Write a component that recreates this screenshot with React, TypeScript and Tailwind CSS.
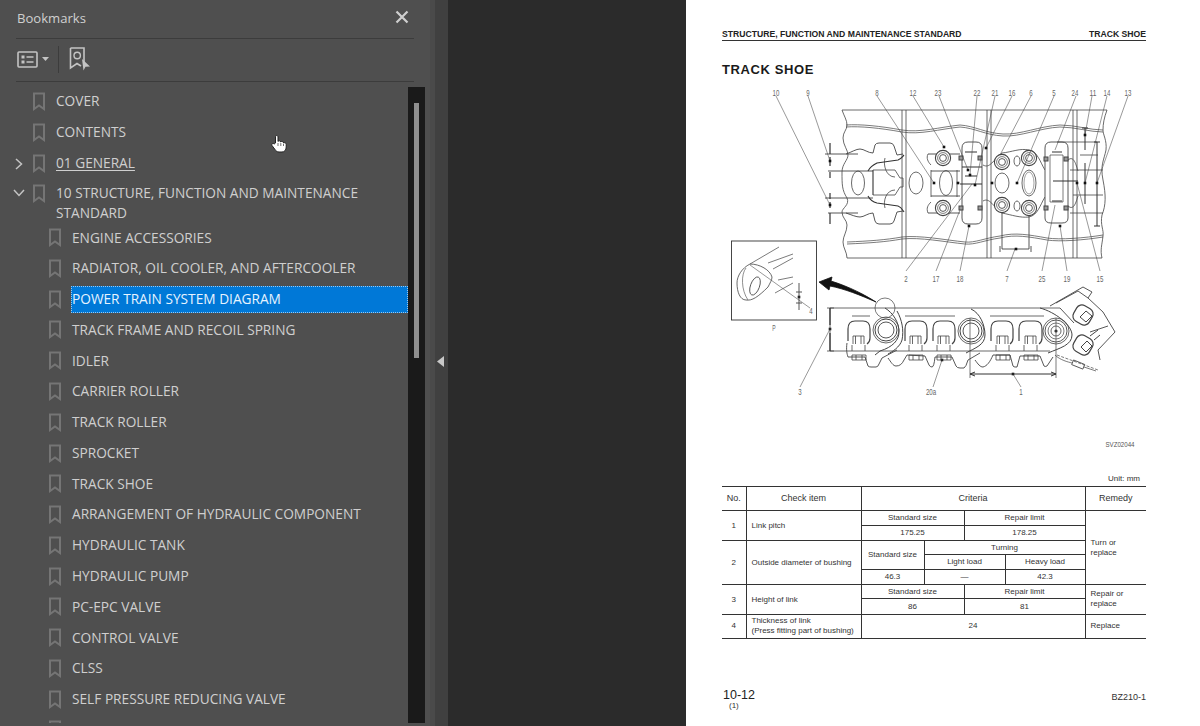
import React from "react";

const Bm = ({ className }: { className: string }) => (
  <svg width="14" height="19" viewBox="0 0 14 19" fill="none" className={className}>
    <path d="M2 1.5H12V17L7 13.5L2 17Z" stroke="#757575" strokeWidth="2" />
  </svg>
);

type Row = { t: string; ch?: "r" | "d"; u?: boolean; sel?: boolean; two?: boolean };
const top: Row[] = [
  { t: "COVER" },
  { t: "CONTENTS" },
  { t: "01 GENERAL", ch: "r", u: true },
  { t: "10 STRUCTURE, FUNCTION AND MAINTENANCE STANDARD", ch: "d", two: true },
];
const kids: Row[] = [
  { t: "ENGINE ACCESSORIES" },
  { t: "RADIATOR, OIL COOLER, AND AFTERCOOLER" },
  { t: "POWER TRAIN SYSTEM DIAGRAM", sel: true },
  { t: "TRACK FRAME AND RECOIL SPRING" },
  { t: "IDLER" },
  { t: "CARRIER ROLLER" },
  { t: "TRACK ROLLER" },
  { t: "SPROCKET" },
  { t: "TRACK SHOE" },
  { t: "ARRANGEMENT OF HYDRAULIC COMPONENT" },
  { t: "HYDRAULIC TANK" },
  { t: "HYDRAULIC PUMP" },
  { t: "PC-EPC VALVE" },
  { t: "CONTROL VALVE" },
  { t: "CLSS" },
  { t: "SELF PRESSURE REDUCING VALVE" },
  { t: " " },
];

const TopRow = ({ r }: { r: Row }) => (
  <div className={`flex items-start pt-[5.4px] ${r.two ? "h-[44.2px]" : "h-[30.8px]"}`}>
    <div className="w-[32px] shrink-0 flex justify-end pr-[8px] pt-[5px]">
      {r.ch === "r" && (
        <svg width="10" height="12" viewBox="0 0 10 12" fill="none">
          <path d="M2 1L7.5 6L2 11" stroke="#c4c4c4" strokeWidth="1.5" />
        </svg>
      )}
      {r.ch === "d" && (
        <svg width="12" height="10" viewBox="0 0 12 10" fill="none" className="-mr-px">
          <path d="M1 2L6 7.5L11 2" stroke="#c4c4c4" strokeWidth="1.5" />
        </svg>
      )}
    </div>
    <Bm className="shrink-0 mt-[1px]" />
    <div className={`ml-[10px] w-[320px] leading-[20px] ${r.u ? "underline underline-offset-2" : ""}`}>{r.t}</div>
  </div>
);

const KidRow = ({ r }: { r: Row }) => (
  <div className="flex items-start h-[30.77px] pl-[48px]">
    <Bm className="shrink-0 mt-[6px]" />
    <div
      className={`ml-[9px] flex-1 pl-px leading-[20px] ${
        r.sel
          ? "h-[27px] mt-[2px] pt-[3.4px] bg-[#0078d7] text-[#e6f3ff] outline-1 outline-dotted outline-[#9cc8ee] -outline-offset-1"
          : "mt-[5.4px]"
      }`}
    >
      {r.t}
    </div>
  </div>
);

const labels: [string, number, number][] = [
  ["10", 776, 92], ["9", 808, 92], ["8", 877, 92], ["12", 913, 92], ["23", 938, 92], ["22", 977, 92], ["21", 995, 92],
  ["16", 1012, 92], ["6", 1031, 92], ["5", 1054, 92], ["24", 1075, 92], ["11", 1093, 92], ["14", 1107, 92], ["13", 1128, 92],
  ["2", 906, 278], ["17", 936, 278], ["18", 960, 278], ["7", 1007, 278], ["25", 1042, 278], ["19", 1067, 278], ["15", 1100, 278],
  ["4", 811, 310], ["P", 774, 327], ["3", 800, 391], ["20a", 931, 391], ["1", 1021, 391],
];
const leaders: number[][] = [
  [776, 96, 830, 205], [808, 96, 830, 161], [877, 96, 934, 183], [913, 96, 944, 147], [939, 96, 968, 170],
  [977, 96, 970, 175], [995, 96, 975, 185], [1012, 96, 986, 148], [1031, 96, 1000, 155], [1054, 96, 1017, 183],
  [1076, 96, 1055, 150], [1092, 96, 1085, 135], [1107, 96, 1085, 183], [1128, 96, 1097, 183],
  [906, 271, 972, 184], [936, 271, 960, 210], [960, 271, 969, 226], [1007, 271, 1015, 249], [1042, 271, 1055, 205],
  [1067, 271, 1060, 226], [1100, 271, 1077, 183], [800, 387, 830, 329], [1021, 387, 1013, 374], [933, 387, 942, 360],
  [750, 265, 810, 308],
];
const dots: number[][] = [
  [830, 205], [830, 161], [934, 183], [944, 147], [968, 170], [970, 175], [975, 185], [986, 148], [1017, 183],
  [1085, 135], [1085, 183], [1097, 183], [1077, 183], [1016, 249], [969, 226], [1060, 226], [830, 329], [1013, 374],
  [942, 360], [958, 183], [992, 183], [799, 297],
];

const Ring = ({ x, y }: { x: number; y: number }) => (
  <g>
    <circle cx={x} cy={y} r="7.6" strokeWidth="1.1" fill="#fff" />
    <circle cx={x} cy={y} r="5.4" strokeWidth="0.7" />
    <circle cx={x} cy={y} r="3.4" strokeWidth="0.9" />
  </g>
);

const Pocket = ({ x, w, bolt }: { x: number; w: number; bolt: number }) => (
  <g>
    <path d={`M${x} 341V329Q${x} 321 ${x + 7} 321H${x + w - 7}Q${x + w} 321 ${x + w} 329V338Q${x + w} 342 ${x + w - 3} 344`} strokeWidth="1.2" fill="#fff" />
    <path d={`M${bolt} 344V336H${bolt + 11}V344M${bolt + 2.5} 336V344M${bolt + 8} 336V344M${bolt - 1} 345V351M${bolt + 12} 345V351`} strokeWidth="0.8" />
    <path d={`M${bolt - 1} 355H${bolt + 13}V360H${bolt - 1}ZM${bolt + 3} 355V360M${bolt + 9} 355V360`} strokeWidth="0.8" />
  </g>
);

const Drawing = () => (
  <svg width="424" height="368" viewBox="722 84 424 368" fill="none" stroke="#444" strokeWidth="0.8" className="block">
    {labels.map(([t, x, y]) => (
      <text key={t + x} x={x} y={y + 3.5} textAnchor="middle" textLength={t.length * 3.4} lengthAdjust="spacingAndGlyphs" fontSize="9.5" fill="#666" stroke="none" fontFamily="'Liberation Sans', sans-serif">
        {t}
      </text>
    ))}

    <path d="M842 110H1107M847 258H1102M902 110V258M906 110V258M987 110V258M991 110V258M1073 110V258M1077 110V258" strokeWidth="0.8" />
    <path d="M846 125C860 124 880 126 902 130 920 133 940 127 960 125 975 126 985 133 1003 134 1020 135 1040 126 1060 125 1075 125 1090 130 1103 130" strokeWidth="0.7" />
    <path d="M846 127C860 126 880 128 902 132 920 135 940 129 960 127 975 128 985 135 1003 136 1020 137 1040 128 1060 127 1075 127 1090 132 1103 132" strokeWidth="0.7" />
    <path d="M847 242C870 241 885 240 902 237 920 235 945 240 965 242 975 243 985 238 1000 236 1015 232 1030 235 1047 238 1060 240 1085 238 1103 235" strokeWidth="0.7" />
    <path d="M847 244C870 243 885 242 902 239 920 237 945 242 965 244 975 245 985 240 1000 238 1015 234 1030 237 1047 240 1060 242 1085 240 1103 237" strokeWidth="0.7" />
    <path d="M842 110C844 116 847 120 847 125 847 130 843 132 843 138 843 145 848 150 848 155 848 160 842 164 842 172 842 185 842 190 847 198 850 205 842 208 842 212 842 218 847 220 847 225 847 232 843 236 843 242 843 248 847 252 847 258" />
    <path d="M1107 110C1104 118 1103 124 1103 130 1103 135 1107 140 1106 150 1104 160 1100 165 1103 180 1106 195 1106 205 1102 215 1100 225 1104 230 1103 236 1102 245 1100 250 1102 258" />

    <path d="M825 154H858M828 171H873M825 198H873M828 213H858M928 154H960M928 213H960M931 171H960M931 196H960" strokeWidth="0.9" />
    <path d="M830 143V154M830 157V166M830 172V178M830 193V199M830 202V208M830 213V224" strokeWidth="1.2" stroke="#333" />
    <path d="M846 154C852 152 856 149 860 149 864 149 868 153 873 153L875 145Q876 143 879 143H890Q893 143 894 146L897 155 903 154" strokeWidth="0.9" />
    <path d="M846 213C852 215 856 217 860 217 864 217 868 213 873 213L875 221Q876 224 879 224H890Q893 224 894 221L897 212 903 211" strokeWidth="0.9" />
    <path d="M868 171C870 167 873 165 877 163L898 160C901 159 902 157 904 155M868 196C870 200 873 202 877 203L898 206C901 207 902 209 904 212" strokeWidth="1.1" stroke="#333" />
    <path d="M873 170V195" strokeWidth="1.1" stroke="#333" />
    <path d="M873 170H895L900 178H903V187H900L895 195H873M885 158C883 165 886 177 895 177M885 208C883 201 886 190 895 190" strokeWidth="0.8" />
    <path d="M928 154C926 158 928 162 931 165M928 213C926 208 928 205 931 202M931 170V197M957 170V197" strokeWidth="0.8" />
    <ellipse cx="858" cy="183" rx="6.5" ry="12" />
    <ellipse cx="916" cy="183" rx="7" ry="11" />
    <ellipse cx="946" cy="183" rx="6.5" ry="12.5" />
    <ellipse cx="1002" cy="183" rx="7" ry="10" />
    <ellipse cx="1029" cy="183" rx="7" ry="13" />
    <ellipse cx="1029" cy="183" rx="5" ry="11" strokeWidth="0.5" />
    <ellipse cx="1017" cy="161" rx="3" ry="5" />
    <ellipse cx="1017" cy="206" rx="3" ry="5" />

    <path d="M1002 205V249M1029 208V249M1002 249H1029M1000 246V252M1031 246V252" strokeWidth="0.9" />
    <path d="M983 165C990 169 993 160 1002 153 1012 152 1020 148 1029 150 1038 152 1040 162 1045 170M983 201C990 197 993 207 1002 213 1012 215 1020 218 1029 217 1038 215 1040 205 1045 197" strokeWidth="0.8" />

    <path d="M962 148Q962 142 968 142H976Q982 142 982 148V218Q982 224 976 224H968Q962 224 962 218Z" fill="#fff" strokeWidth="0.9" />
    <path d="M1045 148Q1045 142 1051 142H1062Q1068 142 1068 148V218Q1068 223 1062 223H1051Q1045 223 1045 218Z" fill="#fff" strokeWidth="0.9" />
    <path d="M1050 155H1063V202H1050Z" strokeWidth="0.7" />
    <path d="M965 152H977M962 167H982M965 176H977M960 184H982M1052 152H1062M1052 201H1062M1053 181H1078" strokeWidth="1.1" stroke="#333" />
    <path d="M1057 142H1097M1080 155H1098M1070 170H1103M1073 195H1103M1070 213H1103M1068 160C1074 155 1076 165 1078 171M1068 206C1074 211 1076 202 1078 196" strokeWidth="0.8" />
    <path d="M1085 128V150M1085 163V204M1097 142V226" strokeWidth="1" stroke="#333" />
    <path d="M1082 128H1088M1094 142H1100M1094 226H1100" strokeWidth="1" stroke="#333" />

    {[[943, 158], [943, 208], [1002, 162], [1029, 158], [1002, 205], [1029, 208]].map(([x, y]) => <Ring key={x * y} x={x} y={y} />)}
    {[[961, 158], [980, 158], [961, 208], [980, 208], [1046, 159], [1066, 159], [1046, 208], [1066, 208]].map(([x, y]) => (
      <rect key={x * y} x={x - 2} y={y - 2} width="4" height="4" strokeWidth="1" fill="#999" />
    ))}
    {leaders.map((l, i) => <line key={i} x1={l[0]} y1={l[1]} x2={l[2]} y2={l[3]} strokeWidth="0.55" />)}
    {dots.map((d, i) => <rect key={i} x={d[0] - 1.3} y={d[1] - 1.3} width="2.6" height="2.6" fill="#111" stroke="none" />)}

    <rect x="731.5" y="241" width="85" height="79" strokeWidth="0.9" stroke="#333" />
    <path d="M750 264L779 247M768 263L793 254M773 269L793 258M778 280L793 277M775 293L793 283" strokeWidth="0.7" />
    <path d="M750 264C742 268 737 276 737 283 737 292 740 300 746 300 752 301 758 297 768 287 770 283 772 280 772 277 770 270 760 264 750 264Z" strokeWidth="0.8" />
    <path d="M746 268C741 274 741 290 748 300" strokeWidth="0.6" />
    <ellipse cx="755" cy="286" rx="4.5" ry="9.5" transform="rotate(20 755 286)" />
    <path d="M799 283V310M796 292H802M796 303H802" strokeWidth="0.9" />
    <path d="M819 282L832 277 831 281C850 287 865 295 876 302 860 295 845 289 830 286L829 290Z" fill="#111" stroke="#111" />

    <path d="M830 308H1060M830 351H1050M830 308V351M827 308H834M827 351H834M852 316H870M905 316H955M990 316H1044" strokeWidth="0.8" />
    <path d="M830 308V325M830 333V351" strokeWidth="1.2" stroke="#333" />
    <Pocket x={848} w={22} bolt={853} />
    <Pocket x={905} w={22} bolt={910} />
    <Pocket x={933} w={22} bolt={938} />
    <Pocket x={991} w={22} bolt={997} />
    <Pocket x={1019} w={23} bolt={1025} />
    {[[886, 330], [971, 331]].map(([x, y]) => (
      <g key={x}>
        <circle cx={x} cy={y} r="13" strokeWidth="0.8" fill="#fff" />
        <circle cx={x} cy={y} r="11" strokeWidth="1" />
        <circle cx={x} cy={y} r="8" strokeWidth="0.9" />
      </g>
    ))}
    <circle cx="1056" cy="331" r="13" strokeWidth="0.8" fill="#fff" />
    <circle cx="1056" cy="331" r="11" strokeWidth="0.9" />
    <circle cx="1056" cy="331" r="8" strokeWidth="0.7" />
    <circle cx="1056" cy="331" r="5" strokeWidth="0.8" />
    <circle cx="1056" cy="331" r="1.6" fill="#333" stroke="none" />
    <circle cx="885" cy="308" r="10" strokeWidth="0.7" />
    <path d="M885 308C893 313 899 322 899 332 899 340 893 347 880 351L875 355M897 311C902 320 904 330 902 340 900 347 892 352 888 354M971 309C980 313 985 325 985 335 985 345 975 348 966 353M1040 308C1055 312 1072 325 1072 335 1072 345 1060 348 1048 353" strokeWidth="1" />
    <path d="M847 343C846 350 847 354 848 357H865L868 366Q869 367 871 367H876Q878 367 879 364L882 358 897 350M888 358C891 362 893 366 896 366 900 366 902 364 904 360L907 355 925 356 929 365Q930 367 932 367 934 367 935 357H952L956 366Q957 368 960 368H964Q966 367 968 360L980 353M975 360C978 364 980 367 983 367 987 366 990 362 993 355H1010L1013 366Q1014 367 1015 367H1017L1020 356H1040L1044 366Q1045 367 1047 366L1053 357" strokeWidth="0.9" />
    <path d="M970 318V378M1056 318V378" strokeWidth="0.7" />
    <path d="M970 374H1056M970 374L975 372M970 374L975 376M1056 374L1051 372M1056 374L1051 376" strokeWidth="1" stroke="#333" />

    <path d="M1050 306L1083 287 1092 292 1088 298 1103 312 1115 332 1098 350 1100 360M1056 303L1078 291 1088 298M1060 308L1074 323M1090 332L1108 326" strokeWidth="0.9" />
    <rect x="1074" y="306" width="18" height="18" rx="6" transform="rotate(30 1083 315)" strokeWidth="1.2" fill="#fff" />
    <rect x="1074" y="336" width="18" height="18" rx="6" transform="rotate(30 1083 345)" strokeWidth="1.2" fill="#fff" />
    <path d="M1080 317L1086 311 1092 316 1086 322ZM1081 347L1087 341 1092 346 1086 352ZM1090 336L1098 330M1094 340L1100 335" strokeWidth="1" />
    <path d="M1057 355L1098 370" strokeWidth="0.7" strokeDasharray="3 1.5" />
    <rect x="1072" y="362" width="12" height="5" transform="rotate(22 1078 365)" />
    <path d="M1055 355C1060 360 1068 362 1072 363M1084 367L1096 371" strokeWidth="0.7" />

    <text x="1120" y="447" textAnchor="middle" textLength="29" lengthAdjust="spacingAndGlyphs" fontSize="6.5" fill="#555" stroke="none" fontFamily="'Liberation Sans', sans-serif">SVZ02044</text>
  </svg>
);

const td = "border border-[#333] text-center align-middle p-0";
const tdl = "border border-[#333] text-left align-middle p-0 pl-[5px]";

const SpecTable = () => (
  <table className="w-[424px] table-fixed border-collapse text-[8px] leading-[10px] text-[#333] border-t border-b border-[#333]">
    <colgroup>
      <col className="w-[24px]" />
      <col className="w-[115px]" />
      <col className="w-[63px]" />
      <col className="w-[40px]" />
      <col className="w-[41px]" />
      <col className="w-[80px]" />
      <col className="w-[61px]" />
    </colgroup>
    <tbody>
      <tr className="h-[24px] text-[9px]">
        <td className={`${td} border-l-0 pb-[2px]`}>No.</td>
        <td className={`${td} pb-[2px]`}>Check item</td>
        <td className={`${td} pb-[2px]`} colSpan={4}>Criteria</td>
        <td className={`${td} border-r-0 pb-[2px]`}>Remedy</td>
      </tr>
      <tr className="h-[15px]">
        <td className={`${td} border-l-0`} rowSpan={2}>1</td>
        <td className={tdl} rowSpan={2}>Link pitch</td>
        <td className={td} colSpan={2}>Standard size</td>
        <td className={td} colSpan={2}>Repair limit</td>
        <td className={`${tdl} border-r-0 border-b-0`} rowSpan={5}>Turn or<br />replace</td>
      </tr>
      <tr className="h-[15px]">
        <td className={td} colSpan={2}>175.25</td>
        <td className={td} colSpan={2}>178.25</td>
      </tr>
      <tr className="h-[14px]">
        <td className={`${td} border-l-0`} rowSpan={3}>2</td>
        <td className={tdl} rowSpan={3}>Outside diameter of bushing</td>
        <td className={td} rowSpan={2}>Standard size</td>
        <td className={td} colSpan={3}>Turning</td>
      </tr>
      <tr className="h-[15px]">
        <td className={td} colSpan={2}>Light load</td>
        <td className={td}>Heavy load</td>
      </tr>
      <tr className="h-[15px]">
        <td className={td}>46.3</td>
        <td className={td} colSpan={2}>—</td>
        <td className={td}>42.3</td>
      </tr>
      <tr className="h-[14px]">
        <td className={`${td} border-l-0`} rowSpan={2}>3</td>
        <td className={tdl} rowSpan={2}>Height of link</td>
        <td className={td} colSpan={2}>Standard size</td>
        <td className={td} colSpan={2}>Repair limit</td>
        <td className={`${tdl} border-r-0 pb-[2px]`} rowSpan={2}>Repair or<br />replace</td>
      </tr>
      <tr className="h-[16px]">
        <td className={td} colSpan={2}>86</td>
        <td className={td} colSpan={2}>81</td>
      </tr>
      <tr className="h-[24px]">
        <td className={`${td} border-l-0 pb-[2px]`}>4</td>
        <td className={`${tdl} pb-[2px]`}>Thickness of link<br />(Press fitting part of bushing)</td>
        <td className={`${td} pb-[2px]`} colSpan={4}>24</td>
        <td className={`${tdl} border-r-0 pb-[2px]`}>Replace</td>
      </tr>
    </tbody>
  </table>
);

export default function App() {
  return (
    <div className="flex h-[726px] w-[1200px] overflow-hidden bg-[#2b2b2b] font-['Liberation_Sans',sans-serif]">
      <aside className="relative flex w-[430px] shrink-0 flex-col bg-[#4f4f4f] font-['Open_Sans',sans-serif] text-[13.7px] text-[#cfcfcf]">
        <div className="mx-[16px] flex h-[39px] shrink-0 items-center justify-between border-b border-[#3c3c3c] pb-[3px] pl-px pr-[5px]">
          <span className="text-[13.1px] leading-[20px]">Bookmarks</span>
          <svg width="14" height="14" viewBox="0 0 14 14" fill="none" className="mb-[2px]">
            <path d="M1.5 1.5L12.5 12.5M12.5 1.5L1.5 12.5" stroke="#cfcfcf" strokeWidth="2.2" />
          </svg>
        </div>
        <div className="mx-[16px] flex h-[43px] shrink-0 items-center border-b border-[#3c3c3c] pb-[2px] pl-[1px]">
          <svg width="21" height="17" viewBox="0 0 21 17" fill="none">
            <rect x="1" y="1" width="19" height="15" rx="1" stroke="#c4c4c4" strokeWidth="1.6" />
            <rect x="4.5" y="4.5" width="3" height="3" fill="#c4c4c4" />
            <rect x="4.5" y="9.5" width="3" height="3" fill="#c4c4c4" />
            <path d="M9.5 6H16.5M9.5 11H16.5" stroke="#c4c4c4" strokeWidth="1.6" />
          </svg>
          <svg width="7" height="4" viewBox="0 0 7 4" className="ml-[4px]">
            <path d="M0 0H7L3.5 4Z" fill="#c4c4c4" />
          </svg>
          <div className="ml-[9px] h-[27px] w-px bg-[#3c3c3c]" />
          <svg width="22" height="24" viewBox="0 0 22 24" fill="none" className="ml-[10px]">
            <path d="M1.5 1H15V15M1.5 1V21L8 16.5L12 19" stroke="#c4c4c4" strokeWidth="1.6" />
            <circle cx="8.2" cy="8.5" r="3.2" stroke="#c4c4c4" strokeWidth="1.4" />
            <path d="M13 12L21 19.5L16.5 19.8L14.5 23.5Z" fill="#c4c4c4" />
          </svg>
        </div>
        <div className="flex min-h-0 flex-1 pr-[5px] pb-[3px]">
          <div className="min-w-0 flex-1 overflow-hidden pt-[3.6px]">
            {top.map((r) => <TopRow key={r.t} r={r} />)}
            {kids.map((r) => <KidRow key={r.t} r={r} />)}
          </div>
          <div className="mt-[5px] flex w-[17px] shrink-0 justify-center bg-[#1a1a1a] pt-[16px]">
            <div className="h-[255px] w-[5px] bg-[#8f8f8f]" />
          </div>
        </div>
        <svg width="18" height="19" viewBox="0 0 18 19" className="absolute left-[270px] top-[134px]">
          <path d="M5.5 9V3C5.5 1 8 1 8 3V7.5C8.5 6.5 10.5 6.5 10.8 8 11.5 7 13.5 7.3 13.5 9 14.5 8.3 16.2 8.8 16.2 10.5V13C16.2 16 14.5 18 12 18H9C7 18 6 17 5 15.5L2 11.5C1.2 10 3 8.7 4.2 10Z" fill="#fff" stroke="#222" strokeWidth="1" />
          <path d="M8 9V12M10.8 9V12M13.5 10V12" stroke="#333" strokeWidth="0.7" />
        </svg>
      </aside>
      <div className="flex w-[18px] shrink-0 items-center justify-center border-l-[5px] border-l-[#4a4a4a] bg-[#404040] pb-[4px] pr-[3px]">
        <svg width="7" height="11" viewBox="0 0 7 11"><path d="M7 0V11L0 5.5Z" fill="#c8c8c8" /></svg>
      </div>
      <div className="w-[238px] shrink-0 bg-[#2b2b2b]" />
      <main className="relative w-[514px] shrink-0 bg-white pl-[36px] pr-[54px] text-[#222]">
        <div className="mt-[29px] flex h-[12px] items-center justify-between border-b border-[#333] pb-[1px] text-[8.65px] font-bold leading-[10px]">
          <span>STRUCTURE, FUNCTION AND MAINTENANCE STANDARD</span>
          <span>TRACK SHOE</span>
        </div>
        <h1 className="mt-[21px] text-[13px] font-bold leading-[16px] tracking-[0.6px] text-[#1a1a1a]">TRACK SHOE</h1>
        <div className="mt-[6px]"><Drawing /></div>
        <div className="mt-[21px] pr-[6px] text-right text-[8px] leading-[12px] text-[#333]">Unit: mm</div>
        <div className="mt-[1px]"><SpecTable /></div>
        <div className="mt-[50px] flex items-start justify-between pl-px">
          <div className="text-[12.5px] leading-[13px] text-[#222]">
            10-12
            <div className="ml-[6px] text-[8px] leading-[8px] text-[#333]">(1)</div>
          </div>
          <div className="mt-[3px] text-[9px] leading-[10px] text-[#333]">BZ210-1</div>
        </div>
      </main>
    </div>
  );
}
